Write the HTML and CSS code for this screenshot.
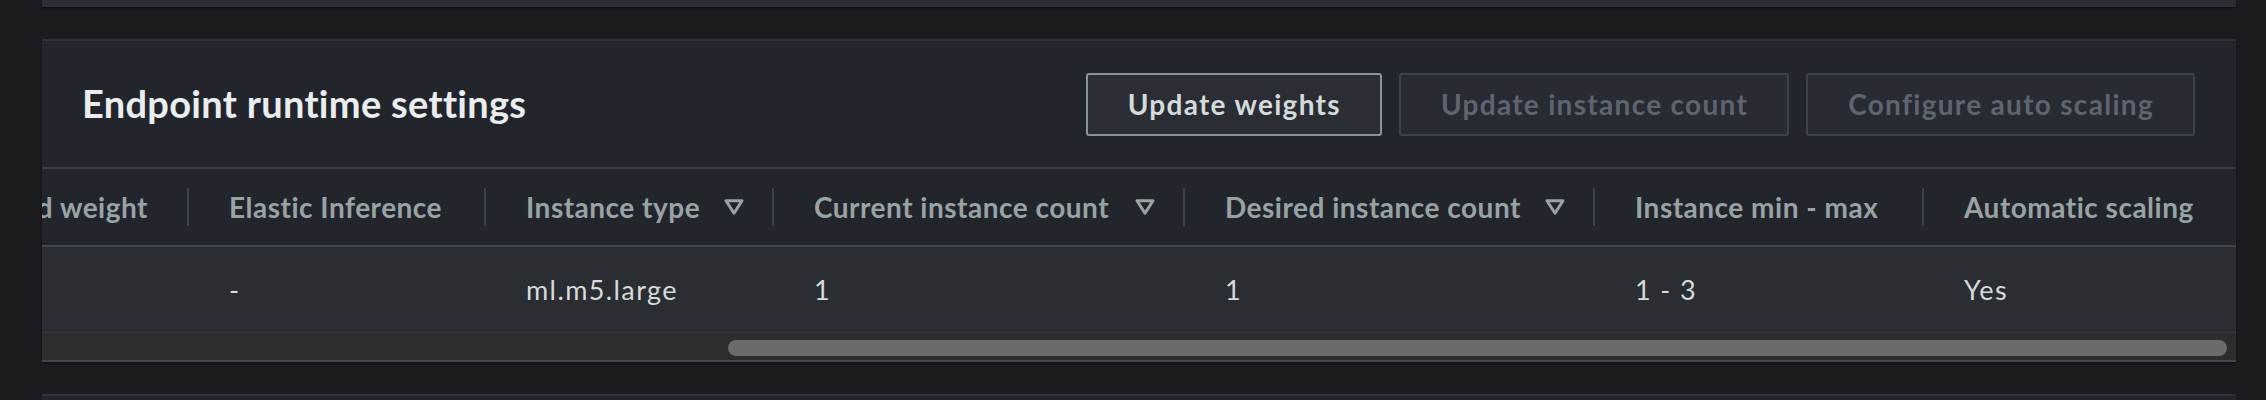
FILE: index.html
```html
<!DOCTYPE html>
<html lang="en">
<head>
<meta charset="utf-8">
<title>Endpoint runtime settings</title>
<link rel="stylesheet" href="styles.css">
</head>
<body>
<div class="page">
  <div class="stub stub-top"></div>
  <section class="panel">
    <header class="panel-header">
      <h2 class="title">Endpoint runtime settings</h2>
      <div class="actions">
        <button class="btn">Update weights</button>
        <button class="btn" disabled>Update instance count</button>
        <button class="btn" disabled>Configure auto scaling</button>
      </div>
    </header>
    <div class="table-scroll">
      <div class="table">
        <div class="th"><div class="th-inner">Desired weight</div></div>
        <div class="th"><div class="th-inner">Elastic Inference</div></div>
        <div class="th"><div class="th-inner sortable">Instance type<svg class="sort" viewBox="0 0 20 16" width="20" height="16"><polygon points="2,1.8 18,1.8 10,14.2"/></svg></div></div>
        <div class="th"><div class="th-inner sortable">Current instance count<svg class="sort" viewBox="0 0 20 16" width="20" height="16"><polygon points="2,1.8 18,1.8 10,14.2"/></svg></div></div>
        <div class="th"><div class="th-inner sortable">Desired instance count<svg class="sort" viewBox="0 0 20 16" width="20" height="16"><polygon points="2,1.8 18,1.8 10,14.2"/></svg></div></div>
        <div class="th"><div class="th-inner">Instance min - max</div></div>
        <div class="th"><div class="th-inner last">Automatic scaling</div></div>

        <div class="td"></div>
        <div class="td">-</div>
        <div class="td">ml.m5.large</div>
        <div class="td">1</div>
        <div class="td">1</div>
        <div class="td">1 - 3</div>
        <div class="td">Yes</div>
      </div>
    </div>
    <div class="scrollbar">
      <div class="thumb" style="width:1499px"></div>
    </div>
  </section>
  <div class="stub stub-bottom"></div>
</div>
</body>
</html>
```

FILE: styles.css
```css
* {
  box-sizing: border-box;
}

html, body {
  margin: 0;
  padding: 0;
  background: #1b1c20;
  height: 400px;
  overflow: hidden;
}

body {
  font-family: "Lato", "Open Sans", sans-serif;
}

.page {
  display: flex;
  flex-direction: column;
  gap: 32px;
  padding: 0 30px 0 42px;
}

.stub {
  height: 7px;
}

.stub-top {
  background: #2b2e34;
  box-shadow: 0 1px 2px rgba(0, 0, 0, 0.6);
}

.stub-bottom {
  background: #23252c;
  border-top: 2px solid #2f3239;
  height: 10px;
}

.panel {
  background: #23252c;
  box-shadow: 0 1px 2px rgba(0, 0, 0, 0.6);
  display: flex;
  flex-direction: column;
}

.panel-header {
  height: 130px;
  border-top: 2px solid #30333a;
  border-bottom: 2px solid #3b3e46;
  display: flex;
  align-items: center;
  justify-content: space-between;
  padding: 0 41px 0 40px;
}

.title {
  margin: 0 0 2px;
  font-size: 38px;
  font-weight: 700;
  letter-spacing: 0.3px;
  color: #eaeded;
  line-height: 1;
}

.actions {
  display: flex;
  gap: 17px;
}

.btn {
  height: 63px;
  padding: 0 39px 0 40px;
  border: 2px solid #879596;
  border-radius: 3px;
  background: #2a2d33;
  color: #d5dbdb;
  font-family: inherit;
  font-size: 28px;
  font-weight: 700;
  letter-spacing: 1.3px;
  line-height: 1;
  display: inline-flex;
  align-items: center;
}

.btn:disabled {
  border-color: #3d4249;
  background: #282b31;
  color: #5d6670;
}

.table-scroll {
  display: flex;
  justify-content: flex-end;
  overflow: hidden;
}

.table {
  flex: none;
  display: grid;
  grid-template-columns: max-content 297px 288px 411px 410px 329px 312px;
  grid-template-rows: 78px 85px;
}

.th {
  background: #23252c;
  border-bottom: 2px solid #41454d;
  display: flex;
  align-items: center;
  color: #98a4a4;
  font-size: 28px;
  font-weight: 700;
  letter-spacing: 0.5px;
  white-space: nowrap;
}

.th-inner {
  flex: 1;
  height: 38px;
  border-right: 2px solid #3e434b;
  padding: 0 39px 0 40px;
  display: flex;
  align-items: center;
  justify-content: space-between;
  line-height: 1;
}

.th-inner.sortable {
  padding-right: 28px;
}

.th-inner.last {
  border-right: none;
}

.sort {
  flex: none;
  margin-left: 22px;
  fill: none;
  stroke: #98a4a4;
  stroke-width: 3;
  stroke-linejoin: round;
}

.td {
  background: #2a2d32;
  display: flex;
  align-items: center;
  padding-left: 40px;
  color: #d5dbdb;
  font-size: 27px;
  letter-spacing: 1.4px;
  white-space: nowrap;
}

.scrollbar {
  height: 30px;
  background: #2d2d2d;
  border-top: 1px solid #3a3a3a;
  border-bottom: 2px solid #474747;
  padding: 7px 9px 4px 0;
  display: flex;
  justify-content: flex-end;
}

.thumb {
  height: 16px;
  border-radius: 8px;
  background: #6b6b6b;
}
```
